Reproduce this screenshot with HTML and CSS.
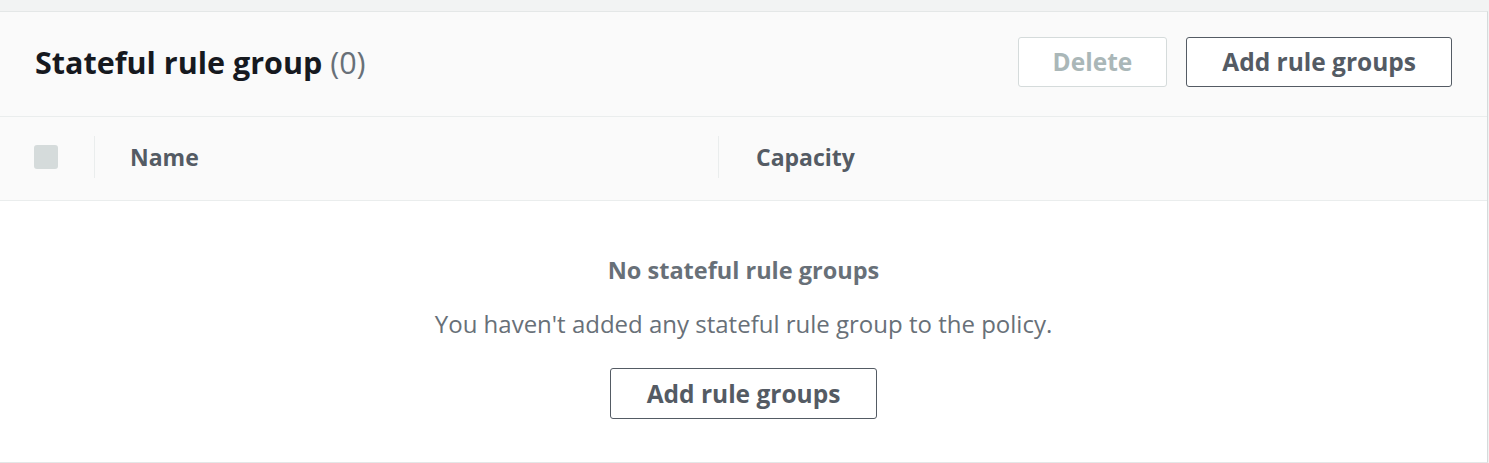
FILE: index.html
```html
<!DOCTYPE html>
<html lang="en">
<head>
<meta charset="utf-8">
<title>Stateful rule group</title>
<link rel="stylesheet" href="styles.css">
</head>
<body>
<div class="page">
  <section class="card">
    <header class="card-header">
      <h2 class="title">Stateful rule group <span class="count">(0)</span></h2>
      <div class="actions">
        <button class="btn btn-disabled" disabled>Delete</button>
        <button class="btn">Add rule groups</button>
      </div>
    </header>
    <div class="table-head">
      <div class="col col-select"><span class="checkbox"></span></div>
      <div class="col col-name"><span class="th">Name</span></div>
      <div class="col col-capacity"><span class="th">Capacity</span></div>
    </div>
    <div class="empty">
      <div class="empty-title">No stateful rule groups</div>
      <p class="empty-desc">You haven't added any stateful rule group to the policy.</p>
      <button class="btn btn-empty">Add rule groups</button>
    </div>
  </section>
</div>
</body>
</html>
```
FILE: styles.css
```css
* { box-sizing: border-box; }
html, body { margin: 0; padding: 0; }
body {
  background: #f2f3f3;
  font-family: "Open Sans", "Noto Sans", sans-serif;
  color: #16191f;
}
.page { padding-top: 11px; }
.card {
  width: 1488px;
  height: 452px;
  background: #fff;
  border-top: 1px solid #e4e7e7;
  border-right: 1px solid #d5dbdb;
  border-bottom: 1px solid #e4e7e7;
  display: flex;
  flex-direction: column;
}
.card-header {
  height: 105px;
  background: #fafafa;
  border-bottom: 1px solid #eaeded;
  display: flex;
  align-items: center;
  justify-content: space-between;
  padding: 0 35px 5px 35px;
}
.title {
  margin: 0;
  font-size: 30.5px;
  font-weight: 700;
  color: #16191f;
}
.count { font-weight: 400; color: #687078; }
.actions { display: flex; gap: 19px; }
.btn {
  font-family: "Open Sans", "Noto Sans", sans-serif;
  font-size: 24.5px;
  font-weight: 700;
  color: #545b64;
  background: #fff;
  border: 1px solid #545b64;
  border-radius: 3px;
  height: 50px;
  padding: 0 35px;
  cursor: pointer;
}
.btn-disabled {
  color: #aab7b8;
  border-color: #d5dbdb;
  cursor: default;
  padding: 0 34px;
}
.table-head {
  height: 84px;
  background: #fafafa;
  border-bottom: 1px solid #eaeded;
  display: flex;
  align-items: center;
  padding-bottom: 3px;
}
.col { display: flex; align-items: center; height: 42px; }
.col-select {
  width: 95px;
  padding-left: 34px;
  border-right: 1px solid #eaeded;
}
.checkbox {
  width: 24px;
  height: 24px;
  background: #d5dbdb;
  border-radius: 3px;
}
.col-name {
  width: 624px;
  padding-left: 35px;
  border-right: 1px solid #eaeded;
}
.col-capacity { padding-left: 37px; }
.th {
  font-size: 23px;
  font-weight: 700;
  color: #545b64;
}
.empty {
  flex: 1;
  display: flex;
  flex-direction: column;
  align-items: center;
  padding-top: 54px;
  color: #687078;
}
.empty-title {
  font-size: 23.5px;
  font-weight: 700;
  line-height: 30px;
}
.empty-desc {
  margin: 24px 0 0;
  font-size: 24px;
  line-height: 30px;
}
.btn-empty { margin-top: 29px; height: 51px; padding: 0 36px; }
```
